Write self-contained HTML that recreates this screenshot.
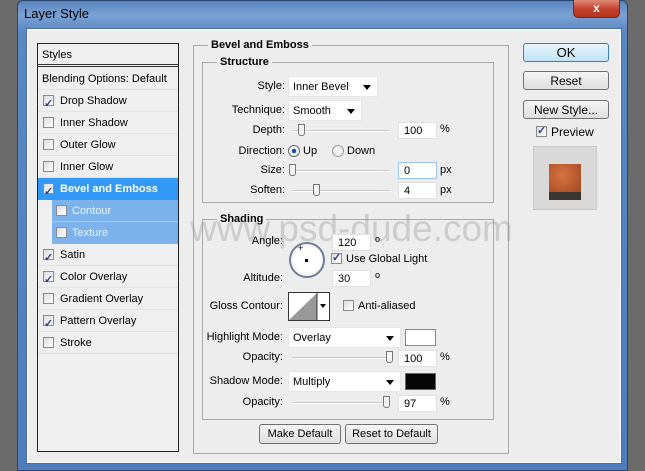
<!DOCTYPE html>
<html><head><style>
*{box-sizing:border-box;margin:0;padding:0}
body{width:645px;height:471px;background:#6b6b6b;position:relative;overflow:hidden;font-family:"Liberation Sans",sans-serif;font-size:11px;color:#000}
.a{position:absolute}
.win{left:17px;top:0;width:611px;height:471px;background:linear-gradient(180deg,#5a84bd 0,#7ba2d4 14px,#5b88c4 30px,#4e7cbc 100%);border-radius:6px 6px 0 0;border:1px solid #2a4670}
.client{left:27px;top:29px;width:594px;height:434px;background:#ededed;border:1px solid #fff;outline:1px solid #4a6f9f}
.lbl{white-space:nowrap}
.r{text-align:right}
.list{left:37px;top:43px;width:142px;height:409px;border:1px solid #222;background:#efefef}
.row{position:absolute;left:0;width:140px;height:22px;line-height:22px;padding-left:22px;border-bottom:1px solid #e2e2e2}
.cb{position:absolute;width:11px;height:11px;border:1px solid #8a8a8a;background:linear-gradient(135deg,#ddd,#fff)}
.cb.on::after{content:"✓";position:absolute;left:0px;top:-3px;font-size:11px;color:#2a3d8f;font-weight:bold}
.grp{border:1px solid #aaa}
.gt{position:absolute;background:#ededed;font-weight:bold;padding:0 3px;line-height:13px}
.dd{position:absolute;background:#fff;height:21px;line-height:21px;padding-left:4px;border:1px solid #e6e6e6}
.dd::after{content:"";position:absolute;right:6px;top:8px;border-left:4px solid transparent;border-right:4px solid transparent;border-top:5px solid #000}
.in{position:absolute;background:#fff;height:17px;width:39px;line-height:17px;padding-left:5px;border:1px solid #e0e0e0}
.trk{position:absolute;height:2px;width:98px;background:#c9c9c9;border-bottom:1px solid #fff}
.th{position:absolute;width:7px;height:12px;border:1px solid #777;border-radius:0 0 3px 3px;background:#f4f4f4}
.btn{position:absolute;height:20px;border:1px solid #707070;border-radius:3px;background:linear-gradient(#f6f6f6,#dedede);text-align:center;line-height:18px;font-size:12px}
</style></head><body>
<div class="a win"></div>
<div class="a lbl" style="left:24px;top:6px;font-size:13px;color:#000">Layer Style</div>
<div class="a" style="left:573px;top:0;width:47px;height:18px;background:linear-gradient(#e08a78,#c2402a 55%,#b63320);border:1px solid #6d2a20;border-top:none;border-radius:0 0 5px 5px;color:#fff;text-align:center;font-weight:bold;font-size:12px;line-height:16px">x</div>
<div class="a client"></div>

<div class="a list">
 <div class="row" style="top:0;padding-left:4px;height:23px;border-bottom:3px double #333">Styles</div>
 <div class="row" style="top:24px;padding-left:4px">Blending Options: Default</div>
 <div class="row" style="top:46px"><span class="cb on" style="left:5px;top:5px"></span>Drop Shadow</div>
 <div class="row" style="top:68px"><span class="cb" style="left:5px;top:5px"></span>Inner Shadow</div>
 <div class="row" style="top:90px"><span class="cb" style="left:5px;top:5px"></span>Outer Glow</div>
 <div class="row" style="top:112px"><span class="cb" style="left:5px;top:5px"></span>Inner Glow</div>
 <div class="row" style="top:134px;background:#3399f6;color:#fff;font-weight:bold;border:none"><span class="cb on" style="left:5px;top:5px"></span>Bevel and Emboss</div>
 <div class="row" style="top:156px;left:14px;width:126px;background:#7db3ec;color:#e8f2ff;padding-left:20px;border-bottom:1px solid #a8cdf3"><span class="cb" style="left:4px;top:5px"></span>Contour</div>
 <div class="row" style="top:178px;left:14px;width:126px;background:#7db3ec;color:#e8f2ff;padding-left:20px;border:none"><span class="cb" style="left:4px;top:5px"></span>Texture</div>
 <div class="row" style="top:200px"><span class="cb on" style="left:5px;top:5px"></span>Satin</div>
 <div class="row" style="top:222px"><span class="cb on" style="left:5px;top:5px"></span>Color Overlay</div>
 <div class="row" style="top:244px"><span class="cb" style="left:5px;top:5px"></span>Gradient Overlay</div>
 <div class="row" style="top:266px"><span class="cb on" style="left:5px;top:5px"></span>Pattern Overlay</div>
 <div class="row" style="top:288px"><span class="cb" style="left:5px;top:5px"></span>Stroke</div>
</div>

<div class="a grp" style="left:193px;top:45px;width:316px;height:409px"></div>
<div class="gt" style="left:208px;top:39px">Bevel and Emboss</div>
<div class="a grp" style="left:202px;top:62px;width:292px;height:141px"></div>
<div class="gt" style="left:217px;top:56px">Structure</div>

<div class="a lbl r" style="left:220px;width:65px;top:80px">Style:</div>
<div class="dd" style="left:288px;top:76px;width:90px">Inner Bevel</div>
<div class="a lbl r" style="left:220px;width:65px;top:104px">Technique:</div>
<div class="dd" style="left:288px;top:100px;width:74px">Smooth</div>
<div class="a lbl r" style="left:220px;width:65px;top:124px">Depth:</div>
<div class="trk" style="left:292px;top:130px"></div><div class="th" style="left:298px;top:124px"></div>
<div class="in" style="left:398px;top:122px">100</div><div class="a" style="left:440px;top:123px">%</div>
<div class="a lbl r" style="left:220px;width:65px;top:145px">Direction:</div>
<div class="a" style="left:288px;top:145px;width:12px;height:12px;border-radius:50%;border:1px solid #666;background:radial-gradient(#1a50b0 30%,#fff 35%)"></div>
<div class="a" style="left:303px;top:145px">Up</div>
<div class="a" style="left:332px;top:145px;width:12px;height:12px;border-radius:50%;border:1px solid #999;background:#f4f4f4"></div>
<div class="a" style="left:347px;top:145px">Down</div>
<div class="a lbl r" style="left:220px;width:65px;top:164px">Size:</div>
<div class="trk" style="left:292px;top:170px"></div><div class="th" style="left:289px;top:164px"></div>
<div class="in" style="left:398px;top:162px;border-color:#9cc3e8">0</div><div class="a" style="left:440px;top:164px">px</div>
<div class="a lbl r" style="left:220px;width:65px;top:184px">Soften:</div>
<div class="trk" style="left:292px;top:190px"></div><div class="th" style="left:313px;top:184px"></div>
<div class="in" style="left:398px;top:182px">4</div><div class="a" style="left:440px;top:184px">px</div>

<div class="a grp" style="left:202px;top:219px;width:292px;height:201px"></div>
<div class="gt" style="left:217px;top:213px">Shading</div>
<div class="a lbl" style="left:190px;top:208px;font-size:37px;color:rgba(150,150,150,0.38);letter-spacing:0px;font-family:'Liberation Sans',sans-serif">www.psd-dude.com</div>

<div class="a lbl r" style="left:220px;width:63px;top:235px">Angle:</div>
<div class="a" style="left:289px;top:242px;width:36px;height:36px;border-radius:50%;border:2px solid #6f7d99;background:radial-gradient(#fff 50%,#e6e6e6)"></div>
<div class="a" style="left:305px;top:259px;width:3px;height:3px;background:#000"></div>
<div class="a" style="left:298px;top:243px;font-size:9px">+</div>
<div class="in" style="left:332px;top:234px">120</div><div class="a" style="left:375px;top:234px;font-size:9px">o</div>
<div class="cb on a" style="left:331px;top:253px"></div><div class="a" style="left:346px;top:253px">Use Global Light</div>
<div class="a lbl r" style="left:220px;width:63px;top:272px">Altitude:</div>
<div class="in" style="left:332px;top:270px">30</div><div class="a" style="left:375px;top:270px;font-size:9px">o</div>
<div class="a lbl r" style="left:200px;width:83px;top:300px">Gloss Contour:</div>
<div class="a" style="left:288px;top:292px;width:42px;height:29px;border:1px solid #333;background:#fff">
<svg width="40" height="27" style="position:absolute;left:0;top:0"><polygon points="0,27 28,0 28,27" fill="#999"/><line x1="28" y1="0" x2="28" y2="27" stroke="#333"/></svg>
<div class="a" style="left:31px;top:11px;border-left:3px solid transparent;border-right:3px solid transparent;border-top:4px solid #000"></div></div>
<div class="cb a" style="left:343px;top:300px"></div><div class="a" style="left:358px;top:300px">Anti-aliased</div>
<div class="a lbl r" style="left:200px;width:83px;top:331px">Highlight Mode:</div>
<div class="dd" style="left:288px;top:327px;width:113px">Overlay</div>
<div class="a" style="left:405px;top:329px;width:31px;height:17px;border:1px solid #888;background:#fff"></div>
<div class="a lbl r" style="left:200px;width:83px;top:351px">Opacity:</div>
<div class="trk" style="left:292px;top:357px"></div><div class="th" style="left:386px;top:351px"></div>
<div class="in" style="left:398px;top:350px">100</div><div class="a" style="left:440px;top:351px">%</div>
<div class="a lbl r" style="left:200px;width:83px;top:375px">Shadow Mode:</div>
<div class="dd" style="left:288px;top:371px;width:113px">Multiply</div>
<div class="a" style="left:405px;top:373px;width:31px;height:17px;border:1px solid #666;background:#050505"></div>
<div class="a lbl r" style="left:200px;width:83px;top:396px">Opacity:</div>
<div class="trk" style="left:292px;top:402px"></div><div class="th" style="left:383px;top:396px"></div>
<div class="in" style="left:398px;top:395px">97</div><div class="a" style="left:440px;top:396px">%</div>

<div class="btn" style="left:259px;top:424px;width:82px;font-size:11px">Make Default</div>
<div class="btn" style="left:345px;top:424px;width:93px;font-size:11px">Reset to Default</div>

<div class="btn" style="left:523px;top:43px;width:86px;height:19px;border-color:#3c7fb1;background:linear-gradient(#e8f6fd,#bfe3f7);font-size:13px">OK</div>
<div class="btn" style="left:523px;top:71px;width:86px;height:19px">Reset</div>
<div class="btn" style="left:523px;top:100px;width:86px;height:19px">New Style...</div>
<div class="cb on a" style="left:536px;top:126px"></div><div class="a" style="left:551px;top:125px;font-size:12px">Preview</div>
<div class="a" style="left:533px;top:146px;width:64px;height:64px;background:#d9d9d9;border:1px solid #c8c8c8"></div>
<div class="a" style="left:549px;top:164px;width:32px;height:28px;background:radial-gradient(circle at 40% 40%,#d5733f,#b85a2e 60%,#9b4a25)"></div>
<div class="a" style="left:549px;top:192px;width:32px;height:8px;background:#3a3530"></div>
</body></html>
